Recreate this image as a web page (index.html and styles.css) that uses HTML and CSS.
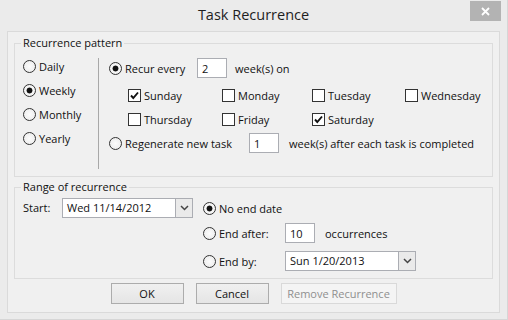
FILE: index.html
```html
<!DOCTYPE html>
<html>
<head>
<meta charset="utf-8">
<link rel="stylesheet" href="styles.css">
</head>
<body>
<div class="window">
  <div class="titlebar">
    <span class="title">Task Recurrence</span>
    <span class="close"><svg width="9" height="9" viewBox="0 0 9 9"><path d="M1 1L8 8M8 1L1 8" stroke="#fff" stroke-width="1.8"/></svg></span>
  </div>
  <div class="client">
    <fieldset class="group pattern">
      <legend>Recurrence pattern</legend>
      <div class="pattern-body">
        <div class="freq">
          <div class="opt"><span class="radio"></span><span>Daily</span></div>
          <div class="opt"><span class="radio on"></span><span>Weekly</span></div>
          <div class="opt"><span class="radio"></span><span>Monthly</span></div>
          <div class="opt"><span class="radio"></span><span>Yearly</span></div>
        </div>
        <div class="sep"></div>
        <div class="weekly">
          <div class="row recur">
            <span class="radio on"></span><span class="l-recur">Recur every</span>
            <span class="field num">2</span><span class="after">week(s) on</span>
          </div>
          <div class="days">
            <div class="day"><span class="check on"><svg width="11" height="11" viewBox="0 0 11 11"><path d="M2 5.5L4.3 8L9 2.5" fill="none" stroke="#111" stroke-width="1.9"/></svg></span><span>Sunday</span></div>
            <div class="day"><span class="check"></span><span>Monday</span></div>
            <div class="day"><span class="check"></span><span>Tuesday</span></div>
            <div class="day"><span class="check"></span><span>Wednesday</span></div>
            <div class="day"><span class="check"></span><span>Thursday</span></div>
            <div class="day"><span class="check"></span><span>Friday</span></div>
            <div class="day"><span class="check on"><svg width="11" height="11" viewBox="0 0 11 11"><path d="M2 5.5L4.3 8L9 2.5" fill="none" stroke="#111" stroke-width="1.9"/></svg></span><span>Saturday</span></div>
          </div>
          <div class="row regen">
            <span class="radio"></span><span class="l-regen">Regenerate new task</span>
            <span class="field num">1</span><span class="after2">week(s) after each task is completed</span>
          </div>
        </div>
      </div>
    </fieldset>
    <fieldset class="group range">
      <legend>Range of recurrence</legend>
      <div class="range-body">
        <div class="start">
          <span class="l-start">Start:</span>
          <span class="combo"><span class="combo-text">Wed 11/14/2012</span><span class="drop"><svg width="9" height="6" viewBox="0 0 9 6"><path d="M1 1L4.5 4.5L8 1" fill="none" stroke="#444" stroke-width="1.5"/></svg></span></span>
        </div>
        <div class="ends">
          <div class="row r1"><span class="radio on"></span><span>No end date</span></div>
          <div class="row r2"><span class="radio"></span><span class="l-end">End after:</span><span class="field num">10</span><span class="occ">occurrences</span></div>
          <div class="row r3"><span class="radio"></span><span class="l-end">End by:</span>
            <span class="combo"><span class="combo-text">Sun 1/20/2013</span><span class="drop"><svg width="9" height="6" viewBox="0 0 9 6"><path d="M1 1L4.5 4.5L8 1" fill="none" stroke="#444" stroke-width="1.5"/></svg></span></span>
          </div>
        </div>
      </div>
    </fieldset>
    <div class="buttons">
      <span class="btn ok">OK</span>
      <span class="btn cancel">Cancel</span>
      <span class="btn remove disabled">Remove Recurrence</span>
    </div>
  </div>
</div>
</body>
</html>
```
FILE: styles.css
```css
* { box-sizing: border-box; }
html, body { margin: 0; padding: 0; }
body {
  width: 508px;
  height: 320px;
  background: #ebebeb;
  font-family: "Open Sans", "Noto Sans", sans-serif;
  font-size: 11px;
  color: #111;
  overflow: hidden;
}
.window {
  width: 508px;
  height: 320px;
  border-right: 1px solid #d6d6d6;
  border-bottom: 1px solid #d6d6d6;
}
.titlebar {
  position: relative;
  height: 31px;
  display: flex;
  align-items: center;
  justify-content: center;
}
.title {
  font-size: 14.5px;
  color: #1e1e1e;
  margin-top: -2px;
}
.close {
  position: absolute;
  left: 470px;
  top: 1px;
  width: 31px;
  height: 20px;
  background: #b3b3b3;
  display: flex;
  align-items: center;
  justify-content: center;
}
.client {
  margin: 0 7px 0 7px;
  height: 282px;
  border: 1px solid #dadada;
  background: #f0f0f0;
  padding: 3px 6px 0 6px;
}
.group {
  margin: 0;
  padding: 0;
  border: 1px solid #dcdcdc;
  min-width: 0;
}
.group legend {
  margin-left: 6px;
  padding: 0 2px;
  line-height: 16px;
  height: 16px;
}
.pattern { height: 142px; }
.range { height: 100px; margin-top: 2px; }

.radio {
  display: inline-block;
  flex: none;
  width: 13px;
  height: 13px;
  border-radius: 50%;
  border: 1px solid #333;
  background: radial-gradient(circle, #fcfcfc 0, #e9e9e9 100%);
}
.radio.on {
  background: radial-gradient(circle, #111 0, #111 2.6px, #f7f7f7 3.3px, #ececec 100%);
}
.check {
  display: inline-flex;
  align-items: center;
  justify-content: center;
  flex: none;
  width: 13px;
  height: 13px;
  border: 1px solid #333;
  background: #fff;
}
.field {
  display: inline-flex;
  align-items: center;
  height: 20px;
  border: 1px solid #abadb3;
  background: #fff;
  padding-left: 4px;
  flex: none;
}
.num { width: 30px; }

.pattern-body { display: flex; }
.freq {
  width: 83px;
  padding-left: 8px;
  padding-top: 3px;
}
.opt {
  height: 24px;
  display: flex;
  align-items: center;
  gap: 3px;
}
.sep {
  width: 1px;
  height: 111px;
  margin-top: 7px;
  background: #a8a8a8;
}
.weekly {
  padding-left: 10px;
  padding-top: 7px;
}
.row {
  height: 20px;
  display: flex;
  align-items: center;
}
.row .radio { margin-right: 3px; }
.l-recur { width: 72px; }
.after { margin-left: 8px; }
.days {
  margin-top: 7px;
  padding-left: 19px;
  display: grid;
  grid-template-columns: 94px 90px 93px auto;
  row-gap: 4px;
}
.day {
  height: 20px;
  display: flex;
  align-items: center;
  gap: 3px;
}
.regen { margin-top: 4px; }
.l-regen { width: 124px; }
.after2 { margin-left: 10px; }

.range-body {
  display: flex;
  padding-top: 3px;
}
.start {
  padding-left: 8px;
  display: flex;
  align-items: flex-start;
}
.l-start {
  width: 39px;
  height: 20px;
  line-height: 20px;
}
.combo {
  display: flex;
  width: 131px;
  height: 20px;
  border: 1px solid #abadb3;
  background: #fff;
  flex: none;
}
.combo-text {
  flex: 1;
  padding-left: 4px;
  line-height: 18px;
}
.drop {
  width: 17px;
  border-left: 1px solid #abadb3;
  background: #eaeaea;
  display: flex;
  align-items: center;
  justify-content: center;
}
.ends { margin-left: 10px; }
.r2 { margin-top: 5px; }
.r3 { margin-top: 8px; }
.l-end { width: 66px; }
.occ { margin-left: 10px; }

.buttons {
  margin-top: 4px;
  display: flex;
  justify-content: center;
  gap: 12px;
}
.btn {
  height: 21px;
  border: 1px solid #acacac;
  background: linear-gradient(#f0f0f0, #e5e5e5);
  display: flex;
  align-items: center;
  justify-content: center;
}
.ok, .cancel { width: 73px; }
.remove { width: 116px; }
.btn.disabled {
  border-color: #d9d9d9;
  background: #f4f4f4;
  color: #8f8f8f;
}
```
